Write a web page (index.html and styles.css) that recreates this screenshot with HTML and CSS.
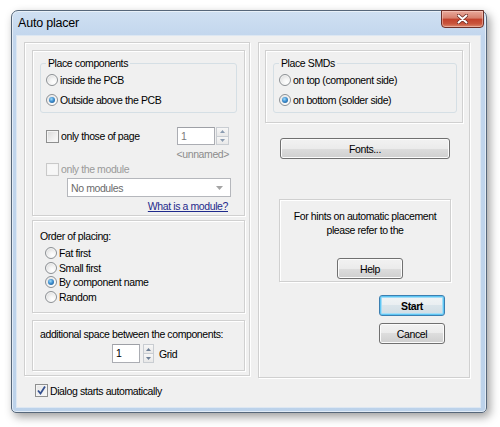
FILE: index.html
```html
<!DOCTYPE html>
<html>
<head>
<meta charset="utf-8">
<title>Auto placer</title>
<link rel="stylesheet" href="styles.css">
</head>
<body>
<div class="window">
  <div class="titlebar">
    <span class="title">Auto placer</span>
    <div class="close">
      <svg width="11" height="10" viewBox="0 0 11 10"><path d="M1.5 1.5 L9.5 8.5 M9.5 1.5 L1.5 8.5" stroke="#6a2a22" stroke-width="3.6" stroke-linecap="round"/><path d="M1.5 1.5 L9.5 8.5 M9.5 1.5 L1.5 8.5" stroke="#fff" stroke-width="2" stroke-linecap="round"/></svg>
    </div>
  </div>
  <div class="client">
    <div class="main">
      <div class="panel left">
        <div class="sub sub1">
          <div class="group">
            <div class="group-title">Place components</div>
            <div class="row"><span class="radio"></span>inside the PCB</div>
            <div class="row"><span class="radio on"></span>Outside above the PCB</div>
          </div>
          <div class="page-row">
            <span class="check"></span>
            <span class="grow">only those of page</span>
            <div class="spin">
              <div class="spin-box w38">1</div>
              <div class="spin-btns w13">
                <span class="sb"><svg width="5" height="3" viewBox="0 0 5 3"><path d="M0 3 L2.5 0 L5 3Z" fill="#8a9bb0"/></svg></span>
                <span class="sb"><svg width="5" height="3" viewBox="0 0 5 3"><path d="M0 0 L2.5 3 L5 0Z" fill="#8a9bb0"/></svg></span>
              </div>
            </div>
          </div>
          <div class="unnamed">&lt;unnamed&gt;</div>
          <div class="module-row"><span class="check dis"></span><span class="dis-text">only the module</span></div>
          <div class="combo"><span class="combo-text">No modules</span><svg width="7" height="4" viewBox="0 0 7 4"><path d="M0 0 L3.5 4 L7 0Z" fill="#a4a4a4"/></svg></div>
          <div class="link-row"><span class="link">What is a module?</span></div>
        </div>
        <div class="sub sub2">
          <div class="sub-title">Order of placing:</div>
          <div class="radios">
            <div class="row small"><span class="radio"></span>Fat first</div>
            <div class="row small"><span class="radio"></span>Small first</div>
            <div class="row small"><span class="radio on"></span>By component name</div>
            <div class="row small"><span class="radio"></span>Random</div>
          </div>
        </div>
        <div class="sub sub3">
          <div class="sub-title s3">additional space between the components:</div>
          <div class="grid-row">
            <div class="spin">
              <div class="spin-box w28">1</div>
              <div class="spin-btns w11 gap">
                <span class="sb"><svg width="5" height="3" viewBox="0 0 5 3"><path d="M0 3 L2.5 0 L5 3Z" fill="#6d7f96"/></svg></span>
                <span class="sb"><svg width="5" height="3" viewBox="0 0 5 3"><path d="M0 0 L2.5 3 L5 0Z" fill="#6d7f96"/></svg></span>
              </div>
            </div>
            <span class="grid-label">Grid</span>
          </div>
        </div>
      </div>
      <div class="panel right">
        <div class="sub smd">
          <div class="group g2">
            <div class="group-title">Place SMDs</div>
            <div class="row"><span class="radio"></span>on top (component side)</div>
            <div class="row"><span class="radio on"></span>on bottom (solder side)</div>
          </div>
        </div>
        <div class="btn fonts">Fonts...</div>
        <div class="hints">
          <div class="hint-text">For hints on automatic placement<br>please refer to the</div>
          <div class="btn help">Help</div>
        </div>
        <div class="btn start">Start</div>
        <div class="btn cancel">Cancel</div>
      </div>
    </div>
    <div class="footer">
      <span class="check on"><svg width="11" height="11" viewBox="0 0 11 11"><path d="M2 5.5 L4.5 8.5 L9 1.5" fill="none" stroke="#34508f" stroke-width="1.8"/></svg></span>
      <span>Dialog starts automatically</span>
    </div>
  </div>
</div>
</body>
</html>
```
FILE: styles.css
```css
* { box-sizing: border-box; }
html, body { margin: 0; padding: 0; }
body {
  width: 500px;
  height: 427px;
  overflow: hidden;
  background: #ffffff;
  font-family: "Liberation Sans", Arial, sans-serif;
  font-size: 10.5px;
  letter-spacing: -0.4px;
  color: #000;
}
.window {
  margin: 10px 0 0 11px;
  width: 476px;
  height: 403px;
  border: 1px solid #56677a;
  border-radius: 7px 7px 5px 5px;
  background: linear-gradient(180deg, #cfe0f2 0, #c2d6ed 26px, #bcd2ea 100%);
  box-shadow: 3px 4px 10px rgba(0,0,0,.38), inset 0 0 0 1px rgba(255,255,255,.55);
  display: flex;
  flex-direction: column;
}
.titlebar {
  height: 25px;
  display: flex;
  align-items: flex-start;
  padding-left: 6px;
}
.title {
  font-size: 12.5px;
  letter-spacing: -0.2px;
  line-height: 25px;
}
.close {
  margin-left: auto;
  margin-right: 2px;
  margin-top: -1px;
  width: 43px;
  height: 18px;
  border: 1px solid #6e3028;
  border-radius: 0 0 4px 4px;
  background: linear-gradient(180deg, #e9a99b 0, #d67f6c 45%, #c2412b 50%, #c9553c 80%, #dc8a6e 100%);
  box-shadow: inset 0 0 0 1px rgba(255,220,210,.45);
  display: flex;
  align-items: center;
  justify-content: center;
}
.client {
  flex: 1;
  margin: 0 6px 5px 5px;
  background: #f0f0f0;
  box-shadow: 0 0 0 1px #dde7f2;
  padding: 6px 10px 0 7px;
  display: flex;
  flex-direction: column;
}
.main {
  display: flex;
  gap: 8px;
  align-items: flex-start;
}
.panel, .sub, .hints {
  border: 1px solid #d0d0d0;
  box-shadow: inset 1px 1px 0 #fff, 1px 1px 0 #fff;
}
.panel.left {
  width: 226px;
  height: 334px;
  padding: 7px 4px 0 7px;
  display: flex;
  flex-direction: column;
}
.panel.right {
  width: 212px;
  height: 336px;
  padding: 7px 6px 0 6px;
  display: flex;
  flex-direction: column;
  align-items: flex-start;
}
.sub1 { height: 166px; }
.sub2 { height: 93px; margin-top: 4px; }
.sub3 { height: 51px; margin-top: 7px; }
.group {
  margin: 12px 7px 0 7px;
  height: 50px;
  border: 1px solid #d5dfe5;
  border-radius: 3px;
  padding: 0 0 0 5px;
}
.group-title {
  margin-top: -7px;
  margin-left: 0;
  padding: 0 2px;
  width: max-content;
  line-height: 13px;
  background: #f0f0f0;
}
.row {
  height: 20px;
  display: flex;
  align-items: center;
  gap: 2px;
}
.row.small { height: 14.6px; }
.radio {
  width: 12px;
  height: 12px;
  border-radius: 50%;
  border: 1px solid #8d9195;
  background: radial-gradient(circle at 65% 70%, #ffffff 0, #f4f4f4 35%, #d2d2d2 100%);
  box-shadow: inset 0 0 0 1px rgba(255,255,255,.6);
  display: flex;
  align-items: center;
  justify-content: center;
  flex: none;
}
.radio.on::after {
  content: "";
  width: 6px;
  height: 6px;
  border-radius: 50%;
  background: radial-gradient(circle at 40% 35%, #9fdcfa 0, #3f8fd0 45%, #1b4f82 100%);
}
.check {
  width: 13px;
  height: 13px;
  border: 1px solid #8e8f8f;
  background: linear-gradient(135deg, #d8d8d8 0, #f0f0f0 60%, #fbfbfb 100%);
  box-shadow: inset 0 0 0 1px #f4f4f4;
  flex: none;
  display: flex;
  align-items: center;
  justify-content: center;
}
.check.dis {
  border-color: #c9c9c9;
  background: #f7f7f7;
}
.check.on {
  background: linear-gradient(135deg, #e6e6e6 0, #f8f8f8 100%);
}
.page-row {
  margin-top: 14px;
  height: 18px;
  display: flex;
  align-items: center;
  padding: 0 15px 0 13px;
}
.grow { flex: 1; margin-left: 2px; }
.spin {
  display: flex;
  height: 18px;
}
.spin-box {
  height: 18px;
  background: #fff;
  border: 1px solid #abadb3;
  border-top-color: #9ea0a6;
  padding-left: 3px;
  line-height: 16px;
}
.spin-box.w38 { width: 38px; color: #7a7a7a; }
.spin-box.w28 { width: 28px; height: 19px; line-height: 17px; }
.spin-btns {
  display: flex;
  flex-direction: column;
  margin-left: 1px;
}
.spin-btns.gap { margin-left: 3px; }
.spin-btns.w13 { width: 13px; }
.spin-btns.w11 { width: 11px; }
.sb {
  flex: 1;
  border: 1px solid #c9cdd2;
  background: linear-gradient(180deg, #f7f7f7, #e8e8e8);
  display: flex;
  align-items: center;
  justify-content: center;
}
.sb + .sb { border-top: none; }
.unnamed {
  margin-top: 3px;
  padding-right: 15px;
  text-align: right;
  line-height: 12px;
  color: #8c8c8c;
}
.module-row {
  margin-top: 2px;
  height: 14px;
  padding-left: 13px;
  display: flex;
  align-items: center;
  gap: 2px;
}
.dis-text { color: #9a9a9a; }
.combo {
  margin: 2px 0 0 34px;
  width: 164px;
  height: 19px;
  border: 1px solid #b5b7bc;
  background: #fff;
  display: flex;
  align-items: center;
  justify-content: space-between;
  padding: 0 7px 0 3px;
  color: #6b6b6b;
}
.link-row {
  margin-top: 3px;
  padding-right: 16px;
  text-align: right;
  line-height: 13px;
}
.link {
  color: #1f2a8c;
  text-decoration: underline;
}
.sub-title {
  padding-left: 7px;
  margin-top: 9px;
  line-height: 13px;
}
.sub-title.s3 { margin-top: 7px; }
.radios {
  margin-top: 3px;
  padding-left: 12px;
}
.grid-row {
  margin-top: 3px;
  padding-left: 79px;
  display: flex;
  align-items: center;
  height: 19px;
}
.grid-row .spin { height: 19px; }
.grid-label { margin-left: 5px; }
.smd {
  width: 198px;
  height: 73px;
}
.group.g2 {
  margin: 12px 5px 0 7px;
}
.btn {
  height: 21px;
  border: 1px solid #707070;
  border-radius: 3px;
  background: linear-gradient(180deg, #f2f2f2 0, #ebebeb 50%, #dddddd 50%, #cfcfcf 100%);
  box-shadow: inset 0 0 0 1px #fbfbfb;
  display: flex;
  align-items: center;
  justify-content: center;
  flex: none;
}
.btn.fonts {
  margin: 15px 0 0 15px;
  width: 170px;
}
.hints {
  margin: 40px 0 0 14px;
  width: 172px;
  height: 83px;
  padding-top: 9px;
  text-align: center;
  line-height: 14px;
}
.btn.help {
  margin: 21px 0 0 57px;
  width: 66px;
}
.btn.start {
  margin: 13px 0 0 114px;
  width: 66px;
  font-weight: bold;
  border-color: #3c7fb1;
  background: linear-gradient(180deg, #f1f4f6 0, #e9eef1 50%, #dae4ea 50%, #d1dde4 100%);
  box-shadow: inset 0 0 0 1px #5fc6f3, inset 0 0 0 2px #a4ddf7;
}
.btn.cancel {
  margin: 7px 0 0 114px;
  width: 66px;
}
.footer {
  margin-top: 6px;
  padding-left: 11px;
  height: 13px;
  display: flex;
  align-items: center;
  gap: 2px;
}
```
